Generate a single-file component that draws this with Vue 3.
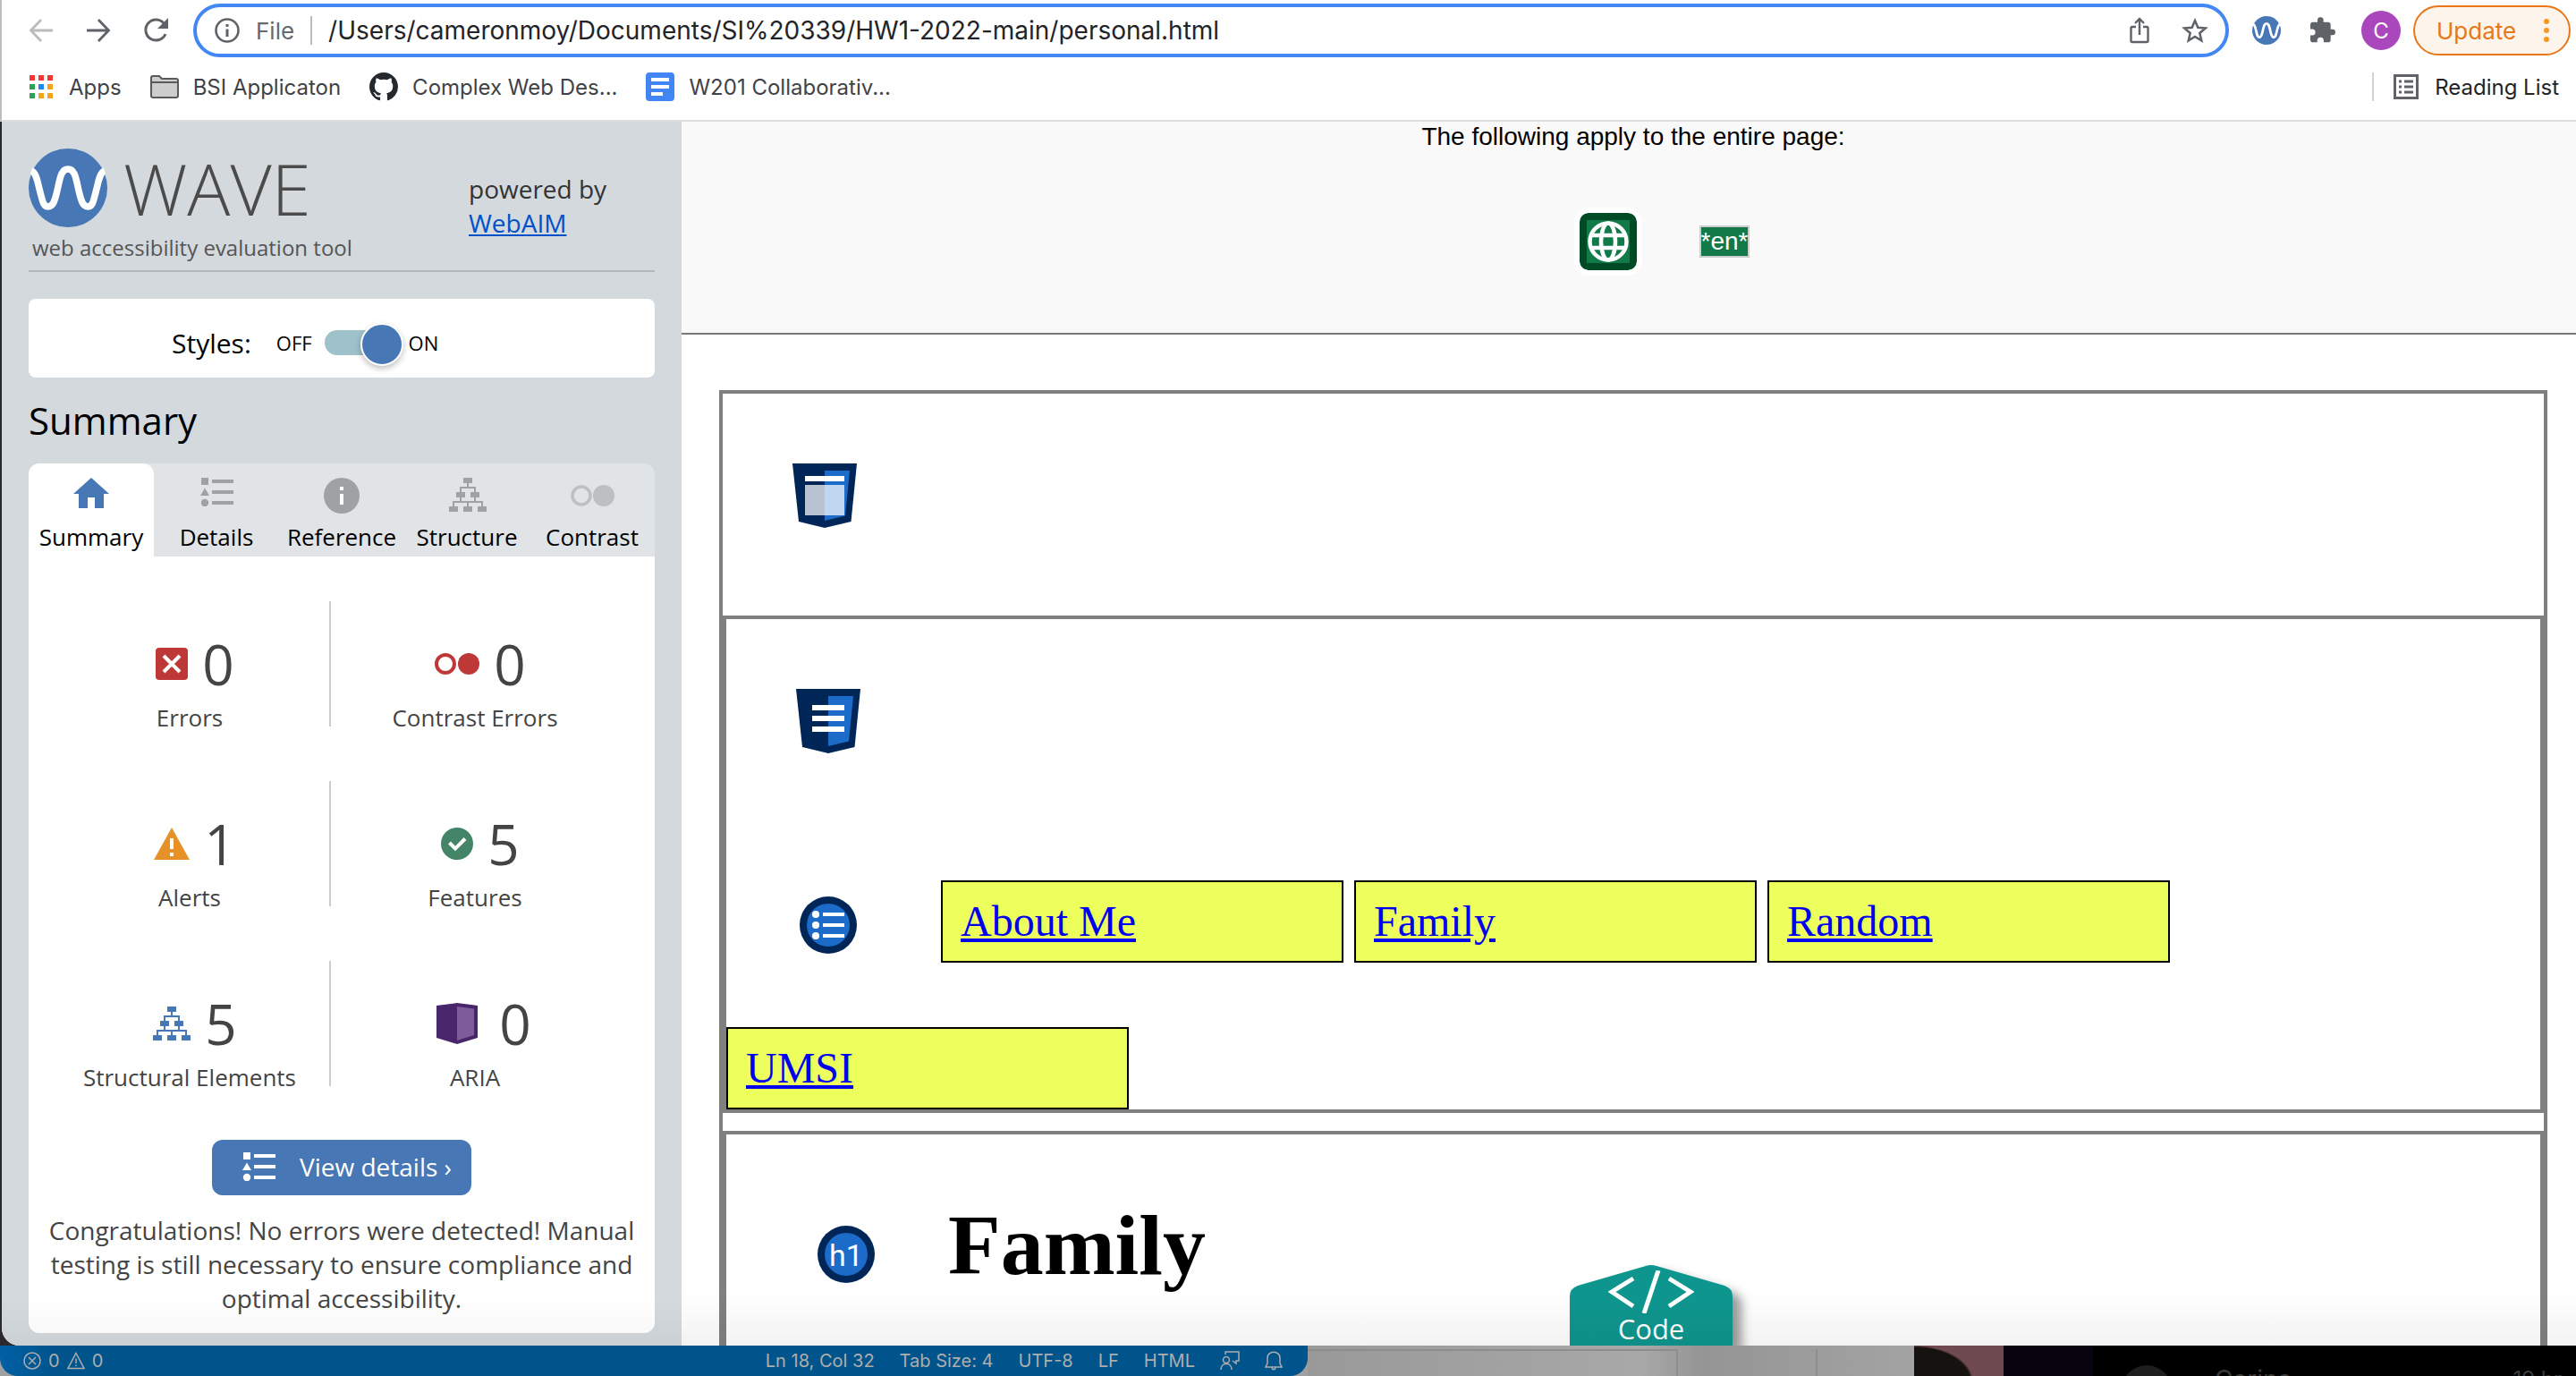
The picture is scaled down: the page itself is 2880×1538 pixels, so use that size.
<script setup>
import { ref } from 'vue'

const address = ref('/Users/cameronmoy/Documents/SI%20339/HW1-2022-main/personal.html')
const stylesOn = ref(true)
const activeTab = ref('Summary')

const tabs = [
  { name: 'Summary', icon: 'tab-home' },
  { name: 'Details', icon: 'tab-details' },
  { name: 'Reference', icon: 'tab-reference' },
  { name: 'Structure', icon: 'tab-structure' },
  { name: 'Contrast', icon: 'tab-contrast' },
]

const stats = [
  { label: 'Errors', count: 0, icon: 'st-error', w: 36, h: 36 },
  { label: 'Contrast Errors', count: 0, icon: 'st-contrast', w: 50, h: 24 },
  { label: 'Alerts', count: 1, icon: 'st-alert', w: 40, h: 36 },
  { label: 'Features', count: 5, icon: 'st-feature', w: 36, h: 36 },
  { label: 'Structural Elements', count: 5, icon: 'st-structure', w: 42, h: 38 },
  { label: 'ARIA', count: 0, icon: 'st-aria', w: 62, h: 46 },
]

const links = ['About Me', 'Family', 'Random', 'UMSI']
</script>

<template>
  <svg class="sprite" aria-hidden="true">
    <symbol id="wave-mark" viewBox="0 0 88 88">
      <circle cx="44" cy="44" r="44" fill="#4777b5" />
      <path d="M3 25C9 27 10 38 13 49C16 61 17 65 22 65C27 65 29 60 32 47C35 34 36 23 44 23C52 23 53 34 56 47C59 60 61 65 66 65C71 65 72 61 75 49C78 38 79 27 85 25" fill="none" stroke="#fff" stroke-width="7.500" />
    </symbol>
    <symbol id="list-shapes" viewBox="0 0 37 32">
      <path d="M1 0h8v8H1zM13 2h24v4H13zM13 14h24v4H13zM13 26h24v4H13zM5 11.500l5 8.500H0z" />
      <circle cx="5" cy="28" r="4.200" />
    </symbol>
    <symbol id="tree" viewBox="0 0 42 38">
      <path d="M16 0h10v6H16zM8 16h10v6H8zM24 16h10v6H24zM0 32h10v6H0zM16 32h10v6H16zM32 32h10v6H32z" />
      <path d="M21 6v5M13 16v-5h16v5M13 22v5M29 22v5M5 32v-5h32v5M21 27v5" fill="none" stroke="currentColor" stroke-width="2" />
    </symbol>
    <symbol id="tab-home" viewBox="0 0 50 40">
      <path fill="#4777b5" d="M25 0L45 18H39V34H29V22H21V34H11V18H5z" />
    </symbol>
    <symbol id="tab-details" viewBox="0 0 50 40">
      <use href="#list-shapes" x="7" y="0" width="37" height="32" fill="#9fa1a3" />
    </symbol>
    <symbol id="tab-reference" viewBox="0 0 50 40">
      <circle cx="25" cy="20" r="20" fill="#9fa1a3" />
      <path fill="#fff" d="M23 10h4v4h-4zM23 18h4v12h-4z" />
    </symbol>
    <symbol id="tab-structure" viewBox="0 0 50 40">
      <use href="#tree" x="5" y="0" width="42" height="38" fill="#9fa1a3" color="#9fa1a3" />
    </symbol>
    <symbol id="tab-contrast" viewBox="0 0 50 40">
      <circle cx="13" cy="20" r="10" fill="none" stroke="#bcc0c3" stroke-width="3.500" />
      <circle cx="38" cy="20" r="12" fill="#bcc0c3" />
    </symbol>
    <symbol id="st-error" viewBox="0 0 36 36">
      <rect width="36" height="36" rx="4" fill="#bf3838" />
      <path d="M9 9L27 27M27 9L9 27" stroke="#fff" stroke-width="4" />
    </symbol>
    <symbol id="st-contrast" viewBox="0 0 50 24">
      <circle cx="12" cy="12" r="10" fill="none" stroke="#bf3838" stroke-width="4" />
      <circle cx="38" cy="12" r="12" fill="#bf3838" />
    </symbol>
    <symbol id="st-alert" viewBox="0 0 40 36">
      <path d="M20 0L40 36H0z" fill="#e59127" />
      <path d="M18 12h4v12h-4zM18 28h4v4h-4z" fill="#fff" />
    </symbol>
    <symbol id="st-feature" viewBox="0 0 36 36">
      <circle cx="18" cy="18" r="18" fill="#458567" />
      <path d="M9.500 17L16 23.500L27 12.500" fill="none" stroke="#fff" stroke-width="4" />
    </symbol>
    <symbol id="st-structure" viewBox="0 0 42 38">
      <use href="#tree" width="42" height="38" fill="#4777b5" color="#4777b5" />
    </symbol>
    <symbol id="st-aria" viewBox="-7 0 62 46">
      <path d="M1 3L24 0L47 3V39L24 46L1 39z" fill="#49256b" />
      <path d="M24 4L43 6.500V36L24 42z" fill="#7e5c99" />
    </symbol>
    <symbol id="shield" viewBox="0 0 72 72">
      <path d="M0 0H72L65.500 65L36 72L7 65z" fill="#002657" />
      <path d="M36 8H64L59 58.500L36 64z" fill="#1c6bc9" />
    </symbol>
    <symbol id="disc" viewBox="0 0 64 64">
      <circle cx="32" cy="32" r="32" fill="#002657" />
      <circle cx="32" cy="32" r="24" fill="#1c6bc9" />
    </symbol>
  </svg>

  <div class="shell">
    <header class="chrome">
      <div class="bar">
        <button class="nav-btn" aria-label="Back">
          <svg width="28" height="28" viewBox="0 0 28 28" fill="none" stroke="#babcbe" stroke-width="2.800"><path d="M27 14H3M14 2L2.500 14L14 26" /></svg>
        </button>
        <button class="nav-btn" aria-label="Forward">
          <svg width="28" height="28" viewBox="0 0 28 28" fill="none" stroke="#5f6368" stroke-width="2.800"><path d="M1 14H25M14 2L25.500 14L14 26" /></svg>
        </button>
        <button class="nav-btn" aria-label="Reload">
          <svg width="28" height="28" viewBox="0 0 28 28"><path d="M23.500 6.500A11.500 11.500 0 1 0 25 18" fill="none" stroke="#5f6368" stroke-width="3" /><path d="M28 0V12H16z" fill="#5f6368" /></svg>
        </button>
        <div class="omnibox">
          <svg width="28" height="28" viewBox="0 0 28 28"><circle cx="14" cy="14" r="12.500" fill="none" stroke="#5f6368" stroke-width="2.600" /><path d="M12.500 7h3v3h-3zM12.500 12.500h3V21h-3z" fill="#5f6368" /></svg>
          <label class="scheme" for="address">File</label>
          <span class="rule"></span>
          <input id="address" v-model="address" class="address" type="text" spellcheck="false" />
          <button class="nav-btn" aria-label="Share">
            <svg width="22" height="30" viewBox="0 0 22 30" fill="none" stroke="#5f6368" stroke-width="2.400"><path d="M7 11H3Q1.500 11 1.500 12.500V26.500Q1.500 28 3 28H19Q20.500 28 20.500 26.500V12.500Q20.500 11 19 11H15M11 20V2.500M6 7L11 2L16 7" /></svg>
          </button>
          <button class="nav-btn" aria-label="Bookmark this tab">
            <svg width="30" height="28" viewBox="0 0 30 28" fill="none" stroke="#5f6368" stroke-width="2.500"><path d="M15 3L18.300 10.800L26.800 11.500L20.300 17L22.300 25.300L15 20.900L7.700 25.300L9.700 17L3.200 11.500L11.700 10.800z" /></svg>
          </button>
        </div>
        <button class="nav-btn" aria-label="WAVE"><svg width="32" height="32"><use href="#wave-mark" /></svg></button>
        <button class="nav-btn" aria-label="Extensions">
          <svg width="34" height="32" viewBox="-1 0 24 24" fill="#5f6368"><path d="M20.500 11H19V7c0-1.100-.9-2-2-2h-4V3.500a2.500 2.500 0 0 0-5 0V5H4c-1.100 0-2 .9-2 2v3.800h1.500a2.700 2.700 0 0 1 0 5.400H2V20c0 1.100.9 2 2 2h3.800v-1.500a2.700 2.700 0 0 1 5.400 0V22H17c1.100 0 2-.9 2-2v-4h1.500a2.500 2.500 0 0 0 0-5z" /></svg>
        </button>
        <button class="avatar" aria-label="Profile">C</button>
        <button class="update">
          Update
          <svg width="6" height="28" viewBox="0 0 6 28" fill="#f7981d"><circle cx="3" cy="4" r="3" /><circle cx="3" cy="14" r="3" /><circle cx="3" cy="24" r="3" /></svg>
        </button>
      </div>
      <nav class="bookmarks" aria-label="Bookmarks">
        <a href="#apps">
          <svg width="28" height="26" viewBox="0 0 28 26">
            <path fill="#f5352f" d="M0 0h6v6H0zM10 0h6v6h-6zM20 0h6v6h-6z" />
            <path fill="#2d9f56" d="M0 10h6v6H0zM0 20h6v6H0z" /><path fill="#1f88f0" d="M10 10h6v6h-6z" />
            <path fill="#f5a31c" d="M20 10h6v6h-6zM10 20h6v6h-6zM20 20h6v6h-6z" />
          </svg>Apps
        </a>
        <a href="#bsi">
          <svg width="32" height="26" viewBox="0 0 32 26"><path d="M1 3Q1 1 3 1H10L13 4H29Q31 4 31 6V23Q31 25 29 25H3Q1 25 1 23z" fill="#cdcdcd" stroke="#5a5a5a" stroke-width="2" /><path d="M1 8H31" stroke="#5a5a5a" stroke-width="2" /></svg>BSI Applicaton
        </a>
        <a href="#complex">
          <svg width="32" height="32" viewBox="0 0 16 16"><path fill="#24292e" d="M8 0C3.580 0 0 3.580 0 8c0 3.540 2.290 6.530 5.470 7.590.4.070.55-.17.55-.38 0-.19-.01-.82-.01-1.490-2.010.37-2.530-.49-2.690-.94-.09-.23-.48-.94-.82-1.130-.28-.15-.68-.52-.01-.53.63-.01 1.080.58 1.230.82.72 1.210 1.870.87 2.330.66.07-.52.28-.87.51-1.070-1.780-.2-3.640-.89-3.640-3.950 0-.87.31-1.590.82-2.150-.08-.2-.36-1.020.08-2.120 0 0 .67-.21 2.200.82.64-.18 1.320-.27 2-.27s1.360.09 2 .27c1.530-1.040 2.200-.82 2.200-.82.44 1.100.16 1.920.08 2.120.51.56.82 1.270.82 2.150 0 3.070-1.870 3.750-3.650 3.950.29.25.54.73.54 1.480 0 1.070-.01 1.930-.01 2.200 0 .21.15.46.55.38A8.010 8.010 0 0 0 16 8c0-4.420-3.580-8-8-8z" /></svg>Complex Web Des...
        </a>
        <a href="#w201">
          <svg width="32" height="32" viewBox="0 0 32 32"><rect width="32" height="32" rx="4" fill="#4285f4" /><path fill="#fff" d="M6 6h20v4H6zM6 14h20v4H6zM6 22h13v4H6z" /></svg>W201 Collaborativ...
        </a>
        <a class="reading" href="#reading">
          <svg width="28" height="28" viewBox="0 0 28 28"><rect x="1.500" y="1.500" width="25" height="25" fill="none" stroke="#5f6368" stroke-width="3" /><path fill="#5f6368" d="M6 6.500h3v3H6zM12 6.500h10v3H12zM6 12.500h3v3H6zM12 12.500h10v3H12zM6 18.500h3v3H6zM12 18.500h10v3H12z" /></svg>Reading List
        </a>
      </nav>
    </header>

    <div class="window">
      <aside class="sidebar">
        <div class="brand">
          <div>
            <div class="logo">
              <svg width="88" height="88"><use href="#wave-mark" /></svg>
              <span>WAVE</span>
            </div>
            <p class="tagline">web accessibility evaluation tool</p>
          </div>
          <p class="powered">powered by<br /><a href="#webaim">WebAIM</a></p>
        </div>

        <label class="styles">
          <span class="styles-name">Styles:</span>
          <span>OFF</span>
          <input v-model="stylesOn" type="checkbox" role="switch" />
          <span>ON</span>
        </label>

        <h2>Summary</h2>

        <div class="tabs" role="tablist">
          <button
            v-for="tab in tabs"
            :key="tab.name"
            role="tab"
            :class="{ active: tab.name === activeTab }"
            :aria-selected="tab.name === activeTab"
            @click="activeTab = tab.name"
          >
            <svg width="50" height="40"><use :href="'#' + tab.icon" /></svg>
            {{ tab.name }}
          </button>
        </div>

        <section class="panel">
          <div class="stats">
            <div v-for="s in stats" :key="s.label" class="stat">
              <div class="figure">
                <svg :width="s.w" :height="s.h"><use :href="'#' + s.icon" /></svg>
                <span>{{ s.count }}</span>
              </div>
              <div class="stat-label">{{ s.label }}</div>
            </div>
          </div>
          <button class="details">
            <svg width="37" height="32" fill="#fff"><use href="#list-shapes" /></svg>
            View details ›
          </button>
          <p>Congratulations! No errors were detected! Manual testing is still necessary to ensure compliance and optimal accessibility.</p>
        </section>
      </aside>

      <main class="page">
        <div class="page-wide">
          <p>The following apply to the entire page:</p>
          <div class="page-icons">
            <svg class="globe" width="64" height="64" viewBox="0 0 64 64">
              <rect width="64" height="64" rx="9" fill="#004b26" /><rect x="8" y="8" width="48" height="48" rx="1" fill="#127a48" />
              <g fill="none" stroke="#fff" stroke-width="4.500"><circle cx="32" cy="32" r="20.500" /><ellipse cx="32" cy="32" rx="8" ry="20.500" /><path d="M12 25H52M12 39H52" /></g>
            </svg>
            <span class="lang">*en*</span>
          </div>
        </div>

        <div class="outline">
          <div class="head-block">
            <svg width="72" height="72" viewBox="0 0 72 72"><use href="#shield" /><path fill="#fff" d="M14 14h44v6H14z" /><path fill="#fff" fill-opacity=".72" d="M14 24h44v34H14z" /></svg>
          </div>
          <nav class="nav-block" aria-label="Page">
            <svg class="nav-shield" width="72" height="72" viewBox="0 0 72 72"><use href="#shield" /><path fill="#fff" d="M18 18h36v6H18zM18 30h36v6H18zM18 42h36v6H18z" /></svg>
            <ul>
              <li class="marker">
                <svg width="64" height="64" viewBox="0 0 64 64"><use href="#disc" /><g fill="#fff"><circle cx="18" cy="20" r="4" /><circle cx="18" cy="32" r="4" /><circle cx="18" cy="44" r="4" /><path d="M26 18h24v4H26zM26 30h24v4H26zM26 42h24v4H26z" /></g></svg>
              </li>
              <li v-for="link in links" :key="link" class="link"><a href="#section">{{ link }}</a></li>
            </ul>
          </nav>
          <section class="family">
            <svg width="64" height="64" viewBox="0 0 64 64"><use href="#disc" /><text x="32" y="45" text-anchor="middle" font-family="Roboto, sans-serif" font-size="34" fill="#fff">h1</text></svg>
            <h1>Family</h1>
          </section>
        </div>

        <button class="code">
          <svg class="code-shape" viewBox="0 0 182 91" width="182" height="91"><path d="M0 91V36Q0 27 9 24L85 2Q91 0 97 2L173 24Q182 27 182 36V91z" fill="#0e968e" /></svg>
          <svg class="code-mark" width="96" height="48" viewBox="0 0 96 48" fill="none" stroke="#fff" stroke-width="5"><path d="M28 9L4 24L28 40M68 9L92 24L68 40M56 0L40 48" /></svg>
          <span>Code</span>
        </button>
      </main>
    </div>

    <footer class="desk">
      <div class="status">
        <svg width="20" height="20" viewBox="0 0 20 20" fill="none" stroke="#adadad" stroke-width="1.500"><circle cx="10" cy="10" r="9" /><path d="M6 6L14 14M14 6L6 14" /></svg>
        <span class="count">0</span>
        <svg width="20" height="20" viewBox="0 0 20 20" fill="none" stroke="#adadad" stroke-width="1.500"><path d="M10 1.500L19 18.500H1zM10 7.500V13M10 14.500V16" /></svg>
        <span class="count">0</span>
        <div class="file-info">
          <span>Ln 18, Col 32</span><span>Tab Size: 4</span><span>UTF-8</span><span>LF</span><span>HTML</span>
          <svg width="22" height="22" viewBox="0 0 22 22" fill="none" stroke="#adadad" stroke-width="1.500"><path d="M6 4V1H21V11H18V14L14 11M1 21C1 12 13 12 13 21" /><circle cx="7" cy="10" r="3.500" /></svg>
          <svg width="20" height="22" viewBox="0 0 20 22" fill="none" stroke="#adadad" stroke-width="1.500"><path d="M1 18H19L17 14V8C17 -1 3 -1 3 8V14zM8 18C8 21.500 12 21.500 12 18" /></svg>
        </div>
      </div>
      <div class="gray"><i></i><i></i></div>
      <div class="photo"></div>
      <div class="dark"><i class="face"></i><span class="who">Carina</span><span class="when">19 hr</span></div>
    </footer>
  </div>
</template>

<style>
body {
  background: #2b292b;
}
</style>

<style scoped>
* {
  box-sizing: border-box;
}
.sprite {
  position: absolute;
  width: 0;
  height: 0;
}
button {
  border: 0;
  padding: 0;
  background: none;
  font-family: inherit;
  color: inherit;
}
svg {
  display: block;
  flex: none;
}
p,
h1,
h2,
ul {
  margin: 0;
  padding: 0;
}
.shell {
  display: flex;
  flex-direction: column;
  height: 100vh;
  overflow: hidden;
  font-family: "Open Sans", sans-serif;
}

/* Browser chrome */
.chrome {
  flex: none;
  padding-top: 4px;
  padding-bottom: 2px;
  background: #fff;
  border-left: 2px solid #bdbdbd;
  border-bottom: 2px solid #dcdedf;
  font-family: Inter, sans-serif;
}
.bar {
  display: flex;
  align-items: center;
  height: 60px;
  padding: 0 6px 0 30px;
}
.nav-btn {
  flex: none;
  margin-right: 36px;
}
.bar > .nav-btn:nth-of-type(3) {
  margin-right: 28px;
}
.omnibox {
  display: flex;
  flex: 1;
  align-items: center;
  height: 60px;
  margin-right: 26px;
  padding: 0 19px 0 20px;
  border: 4px solid #4287f3;
  border-radius: 30px;
}
.scheme {
  margin-left: 18px;
  font-size: 26px;
  color: #66696d;
}
.rule {
  width: 2px;
  height: 32px;
  margin: 0 18px;
  background: #b9bbbe;
}
.address {
  flex: 1;
  border: 0;
  outline: 0;
  padding: 0;
  font: 28px Inter, sans-serif;
  color: #222427;
}
.omnibox .nav-btn:last-child {
  margin-right: 0;
}
.omnibox ~ .nav-btn {
  margin-right: 28px;
}
.avatar {
  width: 44px;
  height: 44px;
  margin-right: 14px;
  border-radius: 50%;
  background: #ab47bc;
  color: #fff;
  font-size: 24px;
}
.update {
  display: flex;
  align-items: center;
  justify-content: space-between;
  width: 176px;
  height: 56px;
  padding: 0 22px 0 24px;
  border: 2px solid #e8771a;
  border-radius: 28px;
  background: #fdf4eb;
  color: #e8771a;
  font-size: 26px;
}
.bookmarks {
  display: flex;
  align-items: center;
  gap: 32px;
  height: 66px;
  margin-bottom: 2px;
  padding: 0 19px 0 31px;
}
.bookmarks a {
  display: flex;
  align-items: center;
  gap: 16px;
  color: #3f4246;
  font-size: 24px;
  text-decoration: none;
}
.bookmarks .reading {
  gap: 18px;
  height: 32px;
  margin-left: auto;
  padding-left: 22px;
  border-left: 2px solid #d0d2d4;
  color: #222427;
}

/* WAVE sidebar */
.window {
  display: flex;
  flex: 1;
  min-height: 0;
  margin-left: 2px;
  border-bottom-left-radius: 20px;
  overflow: hidden;
  background: #fff;
}
.sidebar {
  flex: none;
  width: 760px;
  padding: 30px;
  background: linear-gradient(#d3d9dd 96%, #cbd0d4);
}
.brand {
  display: flex;
  justify-content: space-between;
  padding-bottom: 9px;
  border-bottom: 2px solid #b1b7bb;
}
.logo {
  display: flex;
  gap: 18px;
  font-size: 80px;
  font-weight: 300;
  line-height: 88px;
  color: #4b4b4b;
}
.tagline {
  margin-top: 7px;
  padding-left: 4px;
  font-size: 24px;
  line-height: 32px;
  color: #555;
}
.powered {
  width: 208px;
  padding-top: 26px;
  font-size: 28px;
  line-height: 38px;
  color: #333;
}
.powered a {
  color: #0050c8;
}
.styles {
  display: flex;
  align-items: center;
  height: 88px;
  margin-top: 30px;
  padding: 10px 0 0 160px;
  border-radius: 8px;
  background: #fff;
  font-size: 22px;
}
.styles-name {
  margin-right: 28px;
  font-size: 30px;
}
.styles input {
  position: relative;
  width: 82px;
  height: 28px;
  margin: 0 12px 0 14px;
  appearance: none;
  border-radius: 14px;
  background: #9fc1ca;
}
.styles input::after {
  content: "";
  position: absolute;
  top: -8px;
  left: 0;
  width: 44px;
  height: 44px;
  border: 2px solid #fff;
  border-radius: 50%;
  background: #4777b5;
  box-shadow: 0 3px 6px rgba(0, 0, 0, 0.25);
}
.styles input:checked::after {
  left: 40px;
}
h2 {
  margin: 20px 0;
  font-size: 42px;
  font-weight: 400;
  line-height: 56px;
}
.tabs {
  display: flex;
  border-radius: 12px 12px 0 0;
  background: #e0e4e7;
}
.tabs button {
  display: flex;
  flex: 1;
  flex-direction: column;
  align-items: center;
  gap: 8px;
  height: 104px;
  padding-top: 16px;
  border-radius: 12px 12px 0 0;
  color: #000;
  font-size: 26px;
  line-height: 36px;
}
.tabs .active {
  background: #fff;
}
.panel {
  padding: 50px 0 20px;
  border-radius: 0 0 12px 12px;
  background: linear-gradient(#fff 95%, #f9f9f9);
  color: #444;
  text-align: center;
}
.stats {
  display: grid;
  grid-template-columns: 314px 322px;
  row-gap: 61px;
  padding-left: 24px;
}
.stat {
  padding-top: 28px;
}
.stat:nth-child(odd) {
  border-right: 2px solid #ccc;
}
.figure {
  display: flex;
  align-items: center;
  justify-content: center;
  gap: 16px;
  padding-left: 12px;
  font-size: 62px;
  line-height: 84px;
}
.stat-label {
  margin-top: 8px;
  font-size: 26px;
  line-height: 20px;
}
.details {
  display: flex;
  align-items: center;
  justify-content: space-between;
  width: 290px;
  height: 62px;
  margin: 60px auto 20px;
  padding: 0 22px 2px 34px;
  border-radius: 12px;
  background: #4777b5;
  color: #fff;
  font-size: 28px;
}
.panel p {
  padding: 0 16px;
  font-size: 28px;
  line-height: 38px;
}

/* Evaluated page */
.page {
  position: relative;
  display: flex;
  flex: 1;
  flex-direction: column;
  min-width: 0;
}
.page::after {
  content: "";
  position: absolute;
  right: 0;
  bottom: 0;
  left: 0;
  height: 60px;
  background: linear-gradient(transparent, rgba(0, 0, 0, 0.05));
  pointer-events: none;
}
.page-wide {
  height: 238px;
  padding: 1px 0 0 10px;
  border-bottom: 2px solid #767a74;
  background: #f9f9f9;
  font-family: "Liberation Sans", Arial, sans-serif;
  font-size: 28px;
  line-height: 32px;
  text-align: center;
}
.page-icons {
  display: flex;
  align-items: center;
  justify-content: center;
  gap: 70px;
  margin-top: 69px;
  padding-left: 70px;
}
.globe {
  border-radius: 10px;
  box-shadow: 0 0 0 6px #fff;
}
.lang {
  border: 2px solid #ccc;
  background: #127a48;
  color: #fff;
}
.outline {
  display: flex;
  flex: 1;
  flex-direction: column;
  margin: 62px 32px 0 42px;
  border: 4px solid #808080;
  border-bottom: 0;
}
.head-block {
  height: 248px;
  padding: 78px;
}
.nav-block {
  border: 4px solid #808080;
}
.nav-shield {
  margin: 78px 78px 142px;
}
.nav-block ul {
  display: flex;
  flex-wrap: wrap;
  gap: 72px 12px;
  list-style: none;
}
.marker {
  margin: 18px 82px 0;
}
.link {
  width: 450px;
  padding: 0 20px;
  border: 2px solid #000;
  background: #edff5c;
  font: 48px/88px "Liberation Serif", "Times New Roman", serif;
}
.link a {
  color: #00e;
}
.family {
  display: flex;
  flex: 1;
  align-items: flex-start;
  gap: 82px;
  margin-top: 20px;
  padding: 69px 0 0 102px;
  border: 4px solid #808080;
  border-bottom: 0;
}
.family svg {
  margin-top: 33px;
}
h1 {
  font: bold 96px/110px "Liberation Serif", "Times New Roman", serif;
}
.code {
  position: absolute;
  bottom: 0;
  left: calc(50% - 66px);
  width: 182px;
  height: 91px;
  padding-top: 4px;
  color: #fff;
  font-size: 31px;
  line-height: 34px;
}
.code-shape {
  position: absolute;
  inset: 0;
  overflow: visible;
  filter: drop-shadow(10px 8px 6px rgba(0, 0, 0, 0.4));
}
.code-mark {
  position: relative;
  margin: 0 auto;
}
.code span {
  position: relative;
}

/* Windows behind the browser */
.desk {
  display: flex;
  flex: none;
  height: 34px;
  overflow: hidden;
  background: #a0a0a0;
  font-family: Inter, sans-serif;
}
.status {
  display: flex;
  flex: none;
  align-items: center;
  width: 1462px;
  padding: 0 28px 0 26px;
  border-radius: 0 0 20px 20px;
  background: linear-gradient(90deg, #0060a4, #00548c 60px);
  color: #adadad;
  font-size: 20px;
}
.count {
  margin: 0 8px;
}
.file-info {
  display: flex;
  align-items: center;
  gap: 28px;
  margin-left: auto;
}
.gray {
  display: flex;
  flex: 1;
  padding-top: 4px;
  background: linear-gradient(90deg, #999, #a8a8a8 55%, #959595 65%, #a3a3a3);
}
.gray i {
  width: 61%;
  border-right: 2px solid #8d8d8d;
  border-top: 2px solid #8d8d8d;
}
.gray i + i {
  width: 23%;
  border-top: 0;
}
.photo {
  width: 100px;
  background: radial-gradient(ellipse 66px 40px at 0 40px, #15120f 95%, #6f4a50);
}
.dark {
  display: flex;
  align-items: flex-start;
  width: 640px;
  height: 34px;
  padding: 22px 16px 0 132px;
  background: linear-gradient(90deg, #07040f 100px, #000 100px);
  color: #3a3a3a;
  font-size: 28px;
  line-height: 32px;
}
.face {
  width: 56px;
  height: 56px;
  border-radius: 50%;
  background: #1e1e1e;
}
.who {
  margin-left: 48px;
}
.when {
  margin-left: auto;
  font-size: 24px;
}
</style>
